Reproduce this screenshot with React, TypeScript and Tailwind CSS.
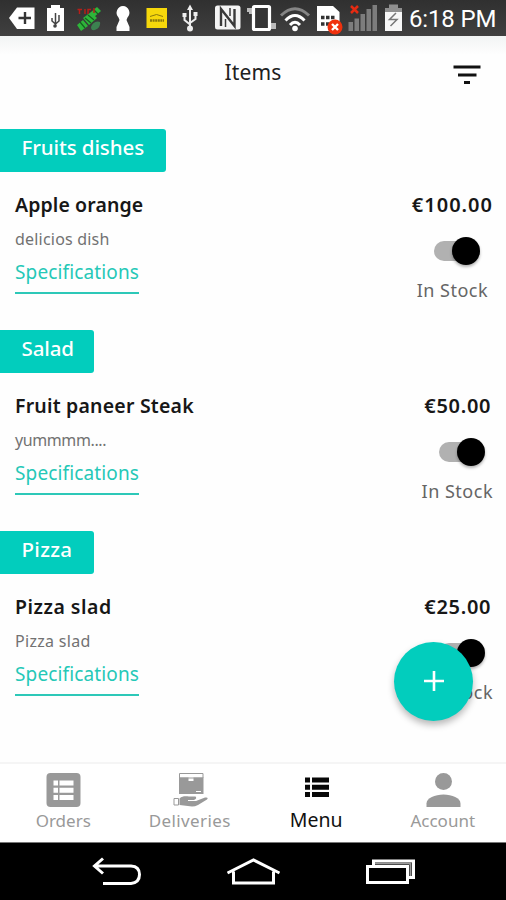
import React from 'react';

interface Item {
  category: string;
  name: string;
  description: string;
  price: string;
  tagClass: string;
  nameClass: string;
  descClass: string;
  priceClass: string;
}

const items: Item[] = [
  {
    category: 'Fruits dishes',
    name: 'Apple orange',
    description: 'delicios dish',
    price: '€100.00',
    tagClass: 'w-[166px] tracking-[-0.1px]',
    nameClass: 'tracking-[0.1px]',
    descClass: 'tracking-[0.2px]',
    priceClass: 'tracking-[1px]',
  },
  {
    category: 'Salad',
    name: 'Fruit paneer Steak',
    description: 'yummmm....',
    price: '€50.00',
    tagClass: 'w-[94px] tracking-[-0.1px]',
    nameClass: 'tracking-[0.2px]',
    descClass: 'tracking-[-0.4px]',
    priceClass: 'tracking-[0.7px] -mr-px',
  },
  {
    category: 'Pizza',
    name: 'Pizza slad',
    description: 'Pizza slad',
    price: '€25.00',
    tagClass: 'w-[94px] tracking-[0.3px]',
    nameClass: 'tracking-[0.5px]',
    descClass: 'tracking-[0.3px]',
    priceClass: 'tracking-[0.7px] -mr-px',
  },
];

const StatusBar = () => (
  <div className="h-9 shrink-0 bg-linear-to-b from-[#303030] to-[#404040] flex items-center text-white">
    <svg width="404" height="36" viewBox="0 0 404 36" className="shrink-0">
      {/* back tag */}
      <path d="M9 18 17 7.500H34.500V29H17Z" fill="#fff" />
      <path d="M18.500 18H31M25 12V24" stroke="#353535" strokeWidth="2.400" />
      {/* usb battery */}
      <path d="M51 5H60V8H64V31H47V8H51Z" fill="#fff" />
      <path d="M55.500 13V26M52 18V21L55.500 24 59 21V15" fill="none" stroke="#444" strokeWidth="1.500" />
      <circle cx="55" cy="26" r="1.800" fill="#444" />
      {/* satellite */}
      <path d="M77 25 83 20 88 26 81 31ZM91 12 97 7 101 11 94 17ZM83 18 91 12 97 18 89 25Z" fill="#2eb53a" />
      <path d="M80 22 85 28M94 10 98 14M85 18 91 23M88 15 94 20" stroke="#14611e" strokeWidth="1.200" />
      <path d="M91 28C91 24 96 20 100 22 101 26 97 31 92 30Z" fill="#3c8250" />
      <path d="M77.500 9.500H82M79.500 9V14M85 9V14M88 14V9.500H91M94 8V13" stroke="#b71f19" strokeWidth="1.500" fill="none" />
      {/* keyhole */}
      <path d="M123 6A6.800 6.800 0 0 1 127.500 17.500L126.500 20 129.500 27V31H116.500V27L119.500 20 118.500 17.500A6.800 6.800 0 0 1 123 6Z" fill="#fff" />
      {/* yellow app */}
      <rect x="146.500" y="8" width="20.500" height="20" fill="#f6d80b" />
      <path d="M150 16.500 156.500 14.500 163 16.500" fill="none" stroke="#8b7a0b" />
      <path d="M150 20.500H164" stroke="#8b7a0b" strokeWidth="2.500" strokeDasharray="2 .6" />
      {/* usb */}
      <g fill="none" stroke="#eee" strokeWidth="2">
        <path d="M190 8V28M184.500 15V20L190 24.500M195.500 14V19L190 23" />
      </g>
      <path d="M190 4.500 193 10H187ZM182.500 13H186.500V17H182.500ZM193.500 12H197.500V16H193.500Z" fill="#eee" />
      <circle cx="190" cy="28.500" r="3" fill="#eee" />
      {/* nfc */}
      <rect x="215" y="5.500" width="25.500" height="24" rx="2.500" fill="#f4f4f4" />
      <path d="M221 26V9L234.500 26V9" fill="none" stroke="#3a3a3a" strokeWidth="2.400" />
      <path d="M225.500 19V27M230 8V16" fill="none" stroke="#3a3a3a" strokeWidth="1.500" />
      {/* vibrate */}
      <path d="M247 8H254V14H249V12H247ZM270 23H276V29H270Z" fill="#bbb" />
      <rect x="253.500" y="6.500" width="16" height="23" rx="1" fill="#353535" stroke="#fff" strokeWidth="3.200" />
      {/* wifi */}
      <g fill="none" strokeWidth="3">
        <path d="M281 15.500Q295 2 309 15.500" stroke="#858585" />
        <path d="M285.500 20.500Q295 10.500 304.500 20.500M290 25Q295 19.500 300 25" stroke="#fff" />
      </g>
      <circle cx="295" cy="28.500" r="2.800" fill="#fff" />
      {/* sim card */}
      <path d="M317 6H333L339.500 12V31H317Z" fill="#fff" />
      <path d="M321 17.500H324.500M326 17.500H329.500M331 17.500H334.500M321 24H324.500M326 24H329.500" stroke="#333" strokeWidth="3.500" />
      <circle cx="335" cy="27" r="7.500" fill="#f0310d" />
      <path d="M332 24 338 30M338 24 332 30" stroke="#fff" strokeWidth="2.400" />
      {/* signal */}
      <path d="M348.500 22H353V31H348.500ZM354.500 18.500H359V31H354.500ZM360.500 14H365V31H360.500ZM366.500 9H371V31H366.500ZM372.500 5H377V31H372.500Z" fill="#7d7d7d" />
      <path d="M351 6 358 13M358 6 351 13" stroke="#e52b12" strokeWidth="2.500" />
      {/* battery */}
      <path d="M389 4.500H398V8H402V31H385V8H389Z" fill="#8f8f8f" />
      <path d="M385 12H402V31H385Z" fill="#f7f7f7" />
      <path d="M396 13 389.500 19.500H397L390.500 26" fill="none" stroke="#777" strokeWidth="1.500" />
    </svg>
    <span className="font-[Roboto,sans-serif] text-[24px] leading-9 pl-[5px] pt-[2px] tracking-[-0.15px] whitespace-nowrap">6:18 PM</span>
  </div>
);

const Toggle = () => (
  <div className="w-[46px] h-7 flex items-center">
    <div className="w-10 h-5 rounded-full bg-[#b1b1b1] flex items-center">
      <div className="w-7 h-7 ml-[18px] shrink-0 rounded-full bg-black shadow-[0_2px_3px_rgba(0,0,0,0.3)]" />
    </div>
  </div>
);

const ItemSection = ({ item }: { item: Item }) => (
  <section className="h-[201px]">
    <div className={`${item.tagClass} h-[43px] pl-[21.5px] rounded-r-[3px] bg-[#02cdbd] text-white text-[20.5px] font-medium leading-[37px] whitespace-nowrap`}>
      {item.category}
    </div>
    <div className="flex justify-between pl-[15px] pr-[13px] pt-[18.5px]">
      <div className="flex flex-col items-start whitespace-nowrap">
        <h2 className={`${item.nameClass} text-[19.5px] font-semibold leading-[30px] text-[#171717]`}>{item.name}</h2>
        <p className={`${item.descClass} mt-[7px] text-[16px] leading-6 text-[#727272]`}>{item.description}</p>
        <a className="mt-1 h-[38.5px] border-b-2 border-[#2dc8b8] text-[19px] leading-[34px] tracking-[0.13px] text-[#25c8b7]">Specifications</a>
      </div>
      <div className="flex flex-col items-center whitespace-nowrap">
        <span className={`${item.priceClass} text-[20px] font-semibold leading-[30px] text-[#171717]`}>{item.price}</span>
        <div className="mt-[17px] ml-2.5"><Toggle /></div>
        <span className="mt-[11px] text-[18px] leading-7 tracking-[0.5px] text-[#656565]">In Stock</span>
      </div>
    </div>
  </section>
);

const OrdersIcon = () => (
  <svg width="36" height="36" viewBox="0 0 36 36">
    <rect x="1.500" y="1" width="34" height="34" rx="4" fill="#999" />
    <path d="M8.500 8.500H13V13.500H8.500ZM14.500 8.500H28.500V13.500H14.500ZM8.500 15.700H13V20.700H8.500ZM14.500 15.700H28.500V20.700H14.500ZM8.500 23H13V28H8.500ZM14.500 23H28.500V28H14.500Z" fill="#fff" />
  </svg>
);

const DeliveriesIcon = () => (
  <svg width="36" height="36" viewBox="0 0 36 36">
    <path d="M7.500 1.500H31V6H7.500Z" fill="#fff" stroke="#999" />
    <path d="M7 5.500H16.500V9H21.500V5.500H31.500V22H7Z" fill="#999" />
    <path d="M24 19.500H29" stroke="#fff" />
    <path d="M2 26.500H6.500V33H2Z" fill="#fff" stroke="#999" />
    <path d="M7.500 26.500C11 23.500 14 24.500 17 24.500H23.500Q25.500 27 22 28H16V29H24L33 25.500Q37 25 35 27.500L26 33Q23 34.500 20 34.500L7.500 33Z" fill="#999" />
  </svg>
);

const MenuIcon = () => (
  <svg width="36" height="36" viewBox="0 0 36 36">
    <path d="M7 5.500H12V10.500H7ZM14 5.500H31V10.500H14ZM7 12.800H12V17.800H7ZM14 12.800H31V17.800H14ZM7 20H12V25H7ZM14 20H31V25H14Z" fill="#080808" />
  </svg>
);

const AccountIcon = () => (
  <svg width="36" height="36" viewBox="0 0 36 36">
    <circle cx="18.500" cy="9.500" r="8.500" fill="#999" />
    <path d="M1.500 35V31.500C1.500 26 10 22.500 18.500 22.500S35.500 26 35.500 31.500V35Z" fill="#999" />
  </svg>
);

const App: React.FC = () => {
  return (
    <div className="relative w-[506px] h-[900px] overflow-hidden flex flex-col bg-[#fefefe] font-['Noto_Sans',sans-serif]">
      <StatusBar />
      <header className="h-[92.5px] shrink-0 px-6 flex bg-linear-to-b from-[#f2f4f4] from-0% to-[#fefefe] to-20%">
        <span className="w-[30px]" />
        <h1 className="flex-1 text-center text-[21px] leading-[72px] tracking-[0.15px] text-[#202020]">Items</h1>
        <svg width="30" height="72" viewBox="0 0 30 72">
          <path d="M1.500 31H28.500M6 39H24.500M12 46.500H18" stroke="#111" strokeWidth="3" />
        </svg>
      </header>

      <main className="flex-1 overflow-hidden">
        {items.map(item => <ItemSection key={item.category} item={item} />)}
      </main>

      <nav className="h-20 shrink-0 grid grid-cols-4 border-t-2 border-[#f5f5f5] bg-white text-[#999] text-[17px]">
        <div className="flex flex-col items-center pt-2">
          <OrdersIcon />
          <span className="leading-[25px]">Orders</span>
        </div>
        <div className="flex flex-col items-center pt-2">
          <DeliveriesIcon />
          <span className="leading-[25px] tracking-[0.4px]">Deliveries</span>
        </div>
        <div className="flex flex-col items-center pt-2 text-[#111]">
          <MenuIcon />
          <span className="text-[19.5px] leading-6">Menu</span>
        </div>
        <div className="flex flex-col items-center pt-2">
          <AccountIcon />
          <span className="leading-[25px]">Account</span>
        </div>
      </nav>

      <div className="h-[58px] shrink-0 bg-black flex items-start pl-[92px] pt-[13px] border-t border-[#777]">
        <svg width="50" height="34" viewBox="0 0 50 34" fill="none" stroke="#fff" strokeWidth="3">
          <path d="M11 2.500 2.500 10 11 17.500M3 10H39Q47.500 10.500 47.500 18.500T39 27.500H11" />
        </svg>
        <svg width="56" height="34" viewBox="0 0 56 34" className="ml-[84px]" fill="none" stroke="#fff" strokeWidth="3">
          <path d="M1.500 17 27.500 4 53.500 17M7.500 15.500V27H47.500V15.500" />
        </svg>
        <svg width="50" height="34" viewBox="0 0 50 34" className="ml-[84px]" fill="none" stroke="#fff" strokeWidth="3">
          <path d="M7.500 10V5H47.500V21.500H43" />
          <path d="M9 7.500H44.500V20" stroke="#999" strokeWidth="2" />
          <rect x="1.500" y="10.500" width="40" height="16" />
        </svg>
      </div>

      <button aria-label="Add item" className="absolute left-[394px] top-[641.5px] size-[79px] rounded-full bg-[#02cdbd] flex items-center justify-center shadow-[0_4px_7px_rgba(0,0,0,0.28)]">
        <svg width="20" height="20" viewBox="0 0 20 20" stroke="#fff" strokeWidth="2.600">
          <path d="M0 10H20M10 0V20" />
        </svg>
      </button>
    </div>
  );
};

export default App;
